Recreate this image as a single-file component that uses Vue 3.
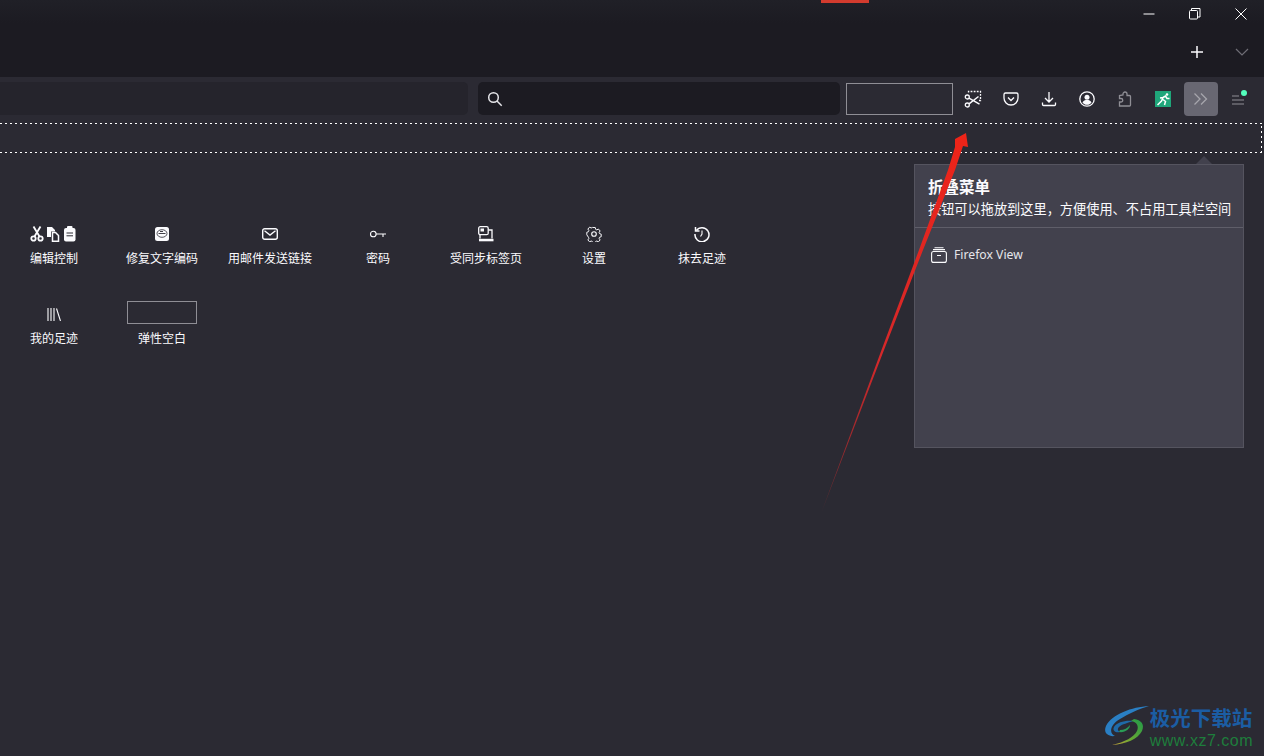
<script setup>
const cjk = ['编辑控制', '修复文字编码', '用邮件发送链接', '密码', '受同步标签页', '设置', '抹去足迹', '我的足迹']
const items = cjk.map((label, idx) => ({ label, icono: idx }))
</script>

<template>
  <div class="ventana">
    <header class="titulo">
      <span class="marca-roja" />
      <div class="controles">
        <svg width="14" height="14" viewBox="0 0 14 14"><path d="M1.5 7h11" stroke="#fff" fill="none" /></svg>
        <svg width="14" height="14" viewBox="0 0 14 14" fill="none" stroke="#fff"><path d="M3.500 3.500V1.500h8.500v8.500h-2" /><rect x="1.500" y="3.500" width="8" height="8.500" rx="1" /></svg>
        <svg width="14" height="14" viewBox="0 0 14 14" fill="none" stroke="#fff"><path d="M1.500 1.500l11 11M12.500 1.500l-11 11" /></svg>
      </div>
      <div class="pestanas">
        <svg width="14" height="14" viewBox="0 0 14 14" fill="none" stroke="#fbfbfe" stroke-width="1.500"><path d="M7 1v12M1 7h12" /></svg>
        <svg width="14" height="10" viewBox="0 0 14 10" fill="none" stroke="#6f6e76" stroke-width="1.200"><path d="M1 2l6 6 6-6" /></svg>
      </div>
    </header>

    <div class="barra">
      <div class="url" />
      <div class="busqueda">
        <svg width="16" height="16" viewBox="0 0 16 16" fill="none" stroke="#e6e6ea" stroke-width="1.500"><circle cx="6.500" cy="6.500" r="4.800" /><path d="M10 10l4.700 4.700" /></svg>
      </div>
      <div class="hueco" />
      <div class="iconos">
        <button>
          <svg width="18" height="18" viewBox="0 0 18 18" fill="none" stroke="#fbfbfe" stroke-width="1.300">
            <path d="M4.500 2.500V1.500H16.500V10.500H14.500" stroke-dasharray="1.800 1.300" />
            <circle cx="3.300" cy="7" r="2" /><circle cx="3.300" cy="15" r="2" />
            <path d="M5 8.200l10.500 6M5 13.800L14.500 6.500" stroke-width="1.500" />
          </svg>
        </button>
        <button>
          <svg width="16" height="16" viewBox="0 0 16 16" fill="none" stroke="#fbfbfe" stroke-width="1.300"><path d="M2.500 2h11A1.500 1.500 0 0 1 15 3.500V7a7 7 0 0 1-14 0V3.500A1.500 1.500 0 0 1 2.500 2z" /><path d="M5 6.500L8 9.500l3-3" /></svg>
        </button>
        <button>
          <svg width="16" height="16" viewBox="0 0 16 16" fill="none" stroke="#fbfbfe" stroke-width="1.300"><path d="M8 1v9.500M4 7l4 4 4-4M1.500 11.500v2A1 1 0 0 0 2.500 14.500h11a1 1 0 0 0 1-1v-2" /></svg>
        </button>
        <button>
          <svg width="16" height="16" viewBox="0 0 16 16" fill="none"><circle cx="8" cy="8" r="7.200" stroke="#fbfbfe" stroke-width="1.300" /><circle cx="8" cy="6.300" r="2.500" fill="#fbfbfe" /><path d="M3.500 11.500c1-2 2.500-2.500 4.500-2.500s3.500.5 4.500 2.500C11.300 13 9.800 13.800 8 13.800S4.700 13 3.500 11.500z" fill="#fbfbfe" /></svg>
        </button>
        <button>
          <svg width="16" height="16" viewBox="0 0 16 16" fill="none" stroke="#8f8e95" stroke-width="1.300"><path d="M6 4V3a2 2 0 0 1 4 0v1.500h2.500a1 1 0 0 1 1 1V14a1 1 0 0 1-1 1H2.500v-4H4a1.600 1.600 0 0 0 0-3.500H2.500V4.500z" /></svg>
        </button>
        <button>
          <svg width="16" height="16" viewBox="0 0 16 16"><rect width="16" height="16" fill="#1fa67a" /><circle cx="12" cy="3.500" r="1.300" fill="#fff" /><path d="M2.500 14l4-4 1.500-3.500-3 .5M8 6.500l2.500-1.500 1.500 2.500h2.500M8 8.500l2.500 2L9.500 14" fill="none" stroke="#fff" stroke-width="1.500" /></svg>
        </button>
        <button class="activo">
          <svg width="16" height="14" viewBox="0 0 16 14" fill="none" stroke="#a6a5ac" stroke-width="1.300"><path d="M1.500 1.500L7 7l-5.500 5.500M8 1.500L13.500 7 8 12.500" /></svg>
        </button>
        <button class="menu">
          <svg width="20" height="20" viewBox="0 0 20 20"><path d="M3 7h7M3 11h12M3 15h12" stroke="#8f8e95" stroke-width="1.200" /><circle cx="15" cy="4" r="3" fill="#54ffbd" /></svg>
        </button>
      </div>
    </div>

    <div class="marcadores" />

    <main class="cuerpo">
      <section class="paleta">
        <div v-for="item in items" :key="item.label" class="elemento">
          <div class="icono">
            <svg v-if="item.icono === 0" width="48" height="16" viewBox="0 0 48 16">
              <g fill="none" stroke="#fbfbfe" stroke-width="1.800"><circle cx="3.500" cy="12.500" r="2.200" /><circle cx="10.500" cy="12.500" r="2.200" /><path d="M3.500 .5l6 10M10.500 .5l-6 10" /></g>
              <path d="M17 1h5l3 3v1.500h-4V11h-4z" fill="#fbfbfe" /><path d="M22.500 6.500h3l3 3v5.800h-6z" fill="none" stroke="#fbfbfe" stroke-width="1.500" />
              <rect x="34" y="2" width="11.500" height="13.500" rx="2" fill="#fbfbfe" /><rect x="37" y="0" width="5.500" height="3" rx="1" fill="#fbfbfe" /><path d="M36.500 7h6.500M36.500 9.800h6.500" stroke="#2b2a33" />
            </svg>
            <svg v-else-if="item.icono === 1" width="14" height="14" viewBox="0 0 14 14">
              <rect width="14" height="14" rx="2.500" fill="#fbfbfe" /><ellipse cx="7" cy="6.500" rx="5" ry="3.800" fill="none" stroke="#2b2a33" stroke-width=".8" /><path d="M3.500 6.500h7M5 4.500h3" stroke="#2b2a33" stroke-width=".9" />
            </svg>
            <svg v-else-if="item.icono === 2" width="16" height="12" viewBox="0 0 16 12" fill="none" stroke="#fbfbfe" stroke-width="1.400"><rect x=".7" y=".7" width="14.600" height="10.600" rx="2" /><path d="M2.500 2.800L8 7l5.500-4.200" /></svg>
            <svg v-else-if="item.icono === 3" width="16" height="8" viewBox="0 0 16 8" fill="none" stroke="#fbfbfe" stroke-width="1.100"><circle cx="3.300" cy="4" r="2.800" /><path d="M6 4h10M13 4v3" /></svg>
            <svg v-else-if="item.icono === 4" width="16" height="16" viewBox="0 0 16 16" fill="none" stroke="#fbfbfe" stroke-width="1.300"><rect x=".7" y=".7" width="9.500" height="8" rx="1.500" /><rect x="2.500" y="2.500" width="3.500" height="3" fill="#fbfbfe" stroke="none" /><path d="M10.200 4h3.800v8.500M2 8.700V12.500" /><rect x="1" y="12.800" width="14.500" height="2.500" fill="#fbfbfe" stroke="none" /></svg>
            <svg v-else-if="item.icono === 5" width="16" height="16" viewBox="0 0 16 16" fill="none" stroke="#fbfbfe" stroke-width="1.100" stroke-linejoin="round"><circle cx="8" cy="8" r="2.300" /><path d="M6.600 .8h2.800l.4 2 1.300.6 1.800-.9 1.900 2.100-1.100 1.700.4 1.200 1.900.7v2.800l-1.900.7-.4 1.200 1.100 1.700-1.900 2.100-1.800-.9-1.300.6-.4 2H6.600l-.4-2-1.300-.6-1.800.9-1.900-2.100 1.100-1.700-.4-1.200L0 8.900V6.100l1.900-.7.400-1.200L1.200 2.500l1.900-2.100 1.800.9 1.300-.6z" transform="translate(.8 .8) scale(.9)" /></svg>
            <svg v-else-if="item.icono === 6" width="16" height="16" viewBox="0 0 16 16" fill="none" stroke="#fbfbfe" stroke-width="1.500"><path d="M2.400 4.500A7 7 0 1 1 1 8" /><path d="M1.500 1v4h4" /><path d="M8 4.500V8l-1.500 2.500" stroke-width="1.100" /></svg>
            <svg v-else width="14" height="13" viewBox="0 0 14 13" fill="none" stroke="#fbfbfe" stroke-width="1.100"><path d="M1 0v13M4 0v13M7 0v13M9.500 .5L13.500 13" /></svg>
          </div>
          <span class="etiqueta">{{ item.label }}</span>
        </div>
        <div class="elemento">
          <div class="icono"><div class="espacio" /></div>
          <span class="etiqueta">弹性空白</span>
        </div>
      </section>

      <aside class="panel">
        <div class="panel-cabecera">
          <h2>折叠菜单</h2>
          <p>按钮可以拖放到这里，方便使用、不占用工具栏空间</p>
        </div>
        <div class="panel-fila">
          <svg width="16" height="16" viewBox="0 0 16 16" fill="none" stroke="#fbfbfe" stroke-width="1.100"><rect x=".6" y="4.500" width="14.800" height="10.900" rx="2" /><path d="M2 2.600h12M3.500 .7h9M6 8.500h4" /></svg>
          <span>Firefox View</span>
        </div>
      </aside>
    </main>

    <svg class="flecha" width="1264" height="756" viewBox="0 0 1264 756">
      <defs>
        <linearGradient id="rojo" x1="0" y1="0" x2="0" y2="1">
          <stop offset="0" stop-color="#ee2418" />
          <stop offset="0.6" stop-color="#d5282a" />
          <stop offset="1" stop-color="#6b2a30" />
        </linearGradient>
      </defs>
      <path d="M822 511L881.500 350 919 250 948 170 955 147 955 139 966 133 968 147 963 146 955 170 923 250 884 350z" fill="url(#rojo)" />
    </svg>

    <div class="marca-agua">
      <svg width="46" height="40" viewBox="0 0 46 40">
        <defs>
          <linearGradient id="verde" x1="1" y1="0" x2="0" y2="1">
            <stop offset="0" stop-color="#1f9a4a" />
            <stop offset="0.6" stop-color="#6aa832" />
            <stop offset="1" stop-color="#c9a13a" />
          </linearGradient>
        </defs>
        <path d="M45 0C28 1 8 8 2 20c-3 7 2 11 9 10C4 27 7 18 16 13 24 8 35 3 45 0z" fill="#2a7fc4" />
        <path d="M29 15c-7-1-16 1-19 6-2 4 2 6 6 5-2-1-3-3-1-5 3-3 9-4 14-6z" fill="#1f6aa8" />
        <path d="M30 13c7 1 11 5 8 12-4 8-16 13-30 14 13-3 22-8 25-14 2-5 0-9-6-10z" fill="url(#verde)" />
        <path d="M16 24c4 0 8-2 10-5 0 4-5 8-11 7z" fill="#2a9d55" />
      </svg>
      <div class="marca-textos">
        <strong>极光下载站</strong>
        <span>www.xz7.com</span>
      </div>
    </div>
  </div>
</template>

<style>
html,
body {
  margin: 0;
  background: #2b2a33;
}
</style>

<style scoped>
.ventana {
  position: relative;
  display: flex;
  flex-direction: column;
  width: 1264px;
  height: 756px;
  overflow: hidden;
  background: #2b2a33;
  color: #fbfbfe;
  font-family: "Noto Sans CJK SC", "Noto Sans", sans-serif;
}

.titulo {
  position: relative;
  display: flex;
  flex-direction: column;
  align-items: flex-end;
  height: 77px;
  flex-shrink: 0;
  background: linear-gradient(#202027, #1c1b22 30%);
}

.marca-roja {
  position: absolute;
  top: 0;
  left: 821px;
  width: 48px;
  height: 3px;
  background: #d23b2e;
}

.controles {
  display: flex;
  gap: 32px;
  padding: 7px 16px 0 0;
}

.pestanas {
  display: flex;
  align-items: center;
  gap: 31px;
  padding: 24px 15px 0 0;
}

.barra {
  display: flex;
  align-items: center;
  height: 46px;
  flex-shrink: 0;
  padding-bottom: 3px;
  box-sizing: border-box;
}

.url {
  width: 468px;
  height: 33px;
  margin-right: 10px;
  border-radius: 0 5px 5px 0;
  background: #25242c;
}

.busqueda {
  display: flex;
  align-items: center;
  width: 362px;
  height: 33px;
  margin-right: 6px;
  padding-left: 9px;
  box-sizing: border-box;
  border-radius: 5px;
  background: #1c1b22;
}

.hueco {
  width: 107px;
  height: 32px;
  box-sizing: border-box;
  border: 1px solid #8f8e95;
}

.iconos {
  display: flex;
  align-items: center;
  margin-left: 3px;
}

.iconos button {
  display: flex;
  align-items: center;
  justify-content: center;
  width: 34px;
  height: 34px;
  margin-right: 4px;
  padding: 0;
  border: 0;
  border-radius: 4px;
  background: none;
}

.iconos .activo {
  background: #686772;
}

.marcadores {
  height: 30px;
  flex-shrink: 0;
  box-sizing: border-box;
  margin-right: 2px;
  background:
    repeating-linear-gradient(90deg, #fff 0 2px, transparent 2px 5px) top / 100% 1px no-repeat,
    repeating-linear-gradient(90deg, #fff 0 2px, transparent 2px 5px) bottom / 100% 1px no-repeat,
    repeating-linear-gradient(0deg, #fff 0 2px, transparent 2px 5px) right / 1px 100% no-repeat;
}

.cuerpo {
  display: flex;
  justify-content: space-between;
  align-items: flex-start;
  padding: 11px 20px 0 0;
}

.paleta {
  display: grid;
  grid-template-columns: repeat(7, 108px);
  grid-auto-rows: 80px;
  margin-top: 56px;
}

.elemento {
  display: flex;
  flex-direction: column;
  align-items: center;
}

.icono {
  display: flex;
  align-items: center;
  justify-content: center;
  height: 24px;
}

.icono svg {
  margin-top: 4px;
}

.espacio {
  width: 70px;
  height: 23px;
  box-sizing: border-box;
  border: 1px solid #8f8e95;
}

.etiqueta {
  margin-top: 5px;
  font-size: 12px;
  line-height: 17px;
  white-space: nowrap;
}

.panel {
  position: relative;
  width: 330px;
  height: 284px;
  box-sizing: border-box;
  border: 1px solid #55545f;
  background: #42414d;
}

.panel::before {
  content: "";
  position: absolute;
  top: -9px;
  right: 31px;
  width: 0;
  height: 0;
  border: 8px solid transparent;
  border-top: 0;
  border-bottom: 8px solid #42414d;
}

.panel-cabecera {
  height: 63px;
  box-sizing: border-box;
  padding: 10px 0 0 13px;
  border-bottom: 1px solid #5f5e69;
}

.panel-cabecera h2 {
  margin: 0;
  font-size: 15.500px;
  font-weight: 700;
  line-height: 22px;
}

.panel-cabecera p {
  margin: 0;
  font-size: 13.200px;
  line-height: 24px;
  white-space: nowrap;
}

.panel-fila {
  display: flex;
  align-items: center;
  gap: 7px;
  padding: 18px 0 0 16px;
  font-family: "Noto Sans", sans-serif;
  font-size: 12.200px;
  line-height: 17px;
  color: #e6e6ea;
}

.flecha {
  position: absolute;
  top: 0;
  left: 0;
  pointer-events: none;
}

.marca-agua {
  position: absolute;
  right: 11px;
  bottom: 6px;
  display: flex;
  align-items: center;
}

.marca-textos {
  display: flex;
  flex-direction: column;
}

.marca-textos strong {
  font-size: 20.500px;
  line-height: 30px;
  color: #1b5da3;
}

.marca-textos span {
  font-family: "Liberation Sans", sans-serif;
  font-size: 16px;
  line-height: 18px;
  letter-spacing: 0.500px;
  color: #1e7d3c;
}
</style>
